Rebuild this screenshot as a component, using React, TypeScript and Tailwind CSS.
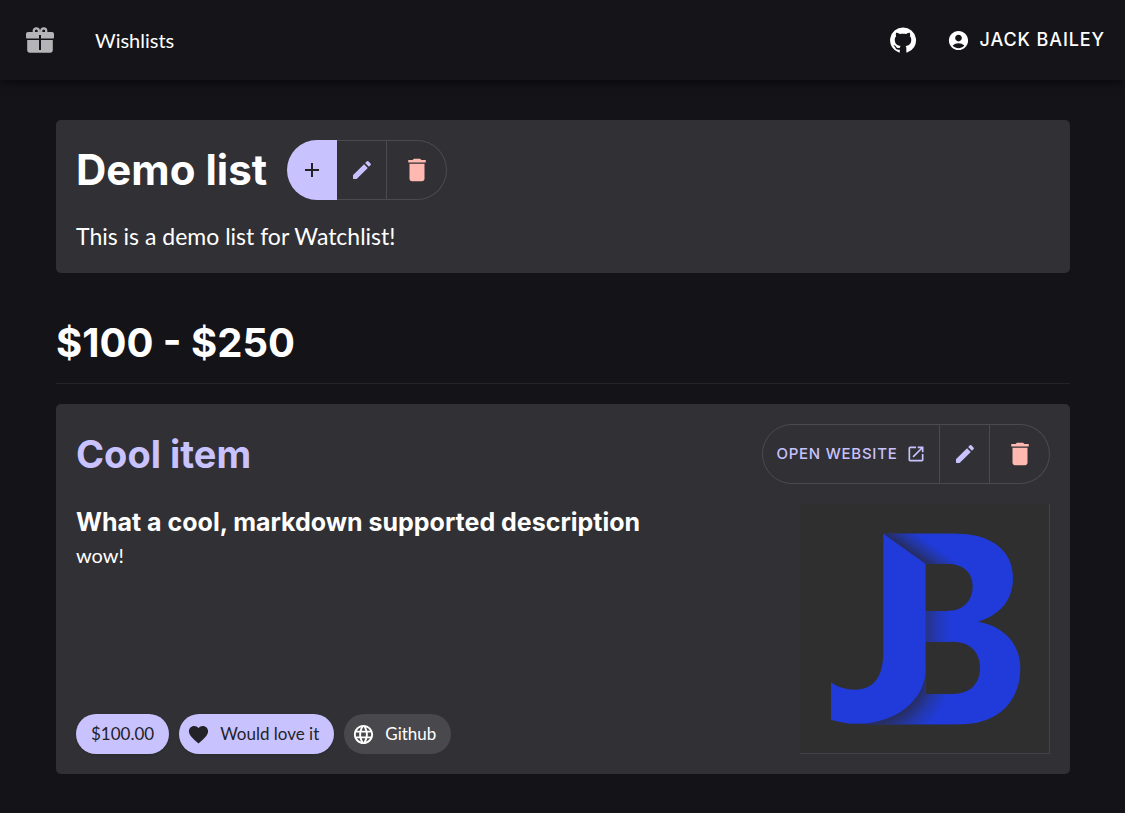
import type { ReactNode } from "react";
import { MdAccountCircle, MdAdd, MdDelete, MdFavorite, MdLanguage, MdOpenInNew } from "react-icons/md";

function GiftIcon() {
  return (
    <svg viewBox="0 0 28 26" className="h-[26px] w-7" aria-hidden="true">
      <g fill="#b5b5b7">
        <path d="M2 5H26C27.100 5 28 5.900 28 7V10.300C28 11 27.500 11.600 26.800 11.600H15V8H13V11.600H1.200C.5 11.600 0 11 0 10.300V7C0 5.900.9 5 2 5Z" />
        <path d="M1.200 12.900H13V23H15V12.900H26.800V23C26.800 24.700 25.700 25.700 24.200 25.700H3.800C2.300 25.700 1.200 24.700 1.200 23Z" />
      </g>
      <g fill="none" stroke="#b5b5b7" strokeWidth="2.200">
        <circle cx="10.300" cy="3.900" r="2.600" />
        <circle cx="17.700" cy="3.900" r="2.600" />
      </g>
    </svg>
  );
}

function GithubIcon() {
  return (
    <svg viewBox="0 0 24 24" fill="currentColor" className="size-7" aria-hidden="true">
      <path d="M12 1.270a11 11 0 00-3.480 21.460c.55.09.73-.28.73-.55v-1.840c-3.030.64-3.670-1.460-3.670-1.460-.55-1.290-1.280-1.650-1.280-1.650-.92-.65.1-.65.1-.65 1.100 0 1.730 1.100 1.730 1.100.92 1.650 2.570 1.200 3.210.92a2 2 0 01.64-1.470c-2.470-.27-5.040-1.190-5.040-5.500 0-1.100.46-2.100 1.200-2.840a3.760 3.760 0 010-2.930s.91-.28 3.110 1.100c1.800-.49 3.700-.49 5.500 0 2.100-1.380 3.020-1.100 3.020-1.100a3.760 3.760 0 01.1 2.930c.83.74 1.200 1.740 1.200 2.940 0 4.210-2.570 5.130-5.040 5.400.45.37.82.92.82 2.020v3.030c0 .27.1.64.73.55A11 11 0 0012 1.270" />
    </svg>
  );
}

function PencilIcon() {
  return (
    <svg viewBox="0 0 24 24" fill="currentColor" className="size-6" aria-hidden="true">
      <path d="M3 17.460v3.040c0 .28.22.5.5.5h3.040c.13 0 .26-.05.35-.15L17.810 9.940l-3.750-3.750L3.150 17.100c-.1.1-.15.22-.15.36zM20.710 7.040c.39-.39.39-1.020 0-1.410l-2.340-2.340a.996.996 0 0 0-1.410 0l-1.830 1.830 3.750 3.750 1.830-1.830z" />
    </svg>
  );
}

function ItemPicture() {
  return (
    <svg viewBox="30 27 747 747" className="size-full" role="img" aria-label="Cool item">
      <defs>
        <linearGradient id="foldTop" gradientUnits="userSpaceOnUse" x1="343" y1="162" x2="378" y2="113">
          <stop offset="0" stopColor="#262c5c" />
          <stop offset="0.5" stopColor="#2336a0" />
          <stop offset="1" stopColor="#203bda" />
        </linearGradient>
        <linearGradient id="foldMiddle" gradientUnits="userSpaceOnUse" x1="407" y1="0" x2="485" y2="0">
          <stop offset="0" stopColor="#273384" />
          <stop offset="0.5" stopColor="#2238ba" />
          <stop offset="1" stopColor="#203bda" />
        </linearGradient>
        <radialGradient id="foldBottom" gradientUnits="userSpaceOnUse" cx="225" cy="500" r="270">
          <stop offset="0.700" stopColor="#272e66" />
          <stop offset="0.850" stopColor="#2338ad" />
          <stop offset="1" stopColor="#203bda" />
        </radialGradient>
      </defs>
      <path
        fill="#203bda"
        fillRule="evenodd"
        d="M280 116H500C605 116 669 168 669 248C669 315 632 358 564 380C642 394 691 446 691 520C691 622 620 688 515 688H230L407 520V207ZM407 207V348H470C520 348 548 318 548 274C548 232 520 207 470 207ZM407 440V597H485C540 597 570 567 570 518C570 470 540 440 485 440Z"
      />
      <path fill="url(#foldTop)" d="M280 116H500V207H407Z" />
      <path fill="#2f2f2f" d="M407 207H470C485 207 494 209 502 212V230H407Z" />
      <path fill="url(#foldMiddle)" d="M407 348H485V440H407Z" />
      <path fill="url(#foldBottom)" d="M407 520V597H500V688H215Z" />
      <path
        fill="#203bda"
        d="M280 116L407 207V520C407 565 390 600 358 630C308 678 210 703 123 674V562C143 577 167 584 195 584C252 584 280 545 280 472Z"
      />
    </svg>
  );
}

const segment =
  "flex h-[60px] items-center justify-center border-y border-r border-[#4b4a4f] text-[#c8c2ff]";

function EditDelete() {
  return (
    <>
      <button type="button" aria-label="Edit" className={`${segment} w-[50px]`}>
        <PencilIcon />
      </button>
      <button
        type="button"
        aria-label="Delete"
        className="flex h-[60px] w-[60px] items-center justify-center rounded-r-full border-y border-r border-[#4b4a4f] text-[#ffb9b1]"
      >
        <MdDelete className="size-[30px]" />
      </button>
    </>
  );
}

function Chip({ icon, filled, children }: { icon?: ReactNode; filled?: boolean; children: ReactNode }) {
  return (
    <li
      className={`flex h-10 items-center gap-[10px] rounded-full pr-[15px] text-[17px] ${
        icon ? "pl-2" : "pl-[15px]"
      } ${filled ? "bg-[#c8c2ff] text-[#232226] shadow-sm" : "bg-[#49484c] text-white"}`}
    >
      {icon}
      {children}
    </li>
  );
}

export default function App() {
  return (
    <div className="min-h-screen bg-[#141318] font-['Lato','Noto_Sans',sans-serif] text-white">
      <header className="flex h-20 items-center bg-[#151419] px-5 shadow-[0_2px_10px_rgba(0,0,0,0.6)]">
        <a href="#home" aria-label="Home" className="px-[6px]">
          <GiftIcon />
        </a>
        <a href="#wishlists" className="ml-[35px] text-xl">
          Wishlists
        </a>
        <div className="ml-auto flex items-center gap-[30px]">
          <a href="#github" aria-label="Github">
            <GithubIcon />
          </a>
          <button
            type="button"
            className="flex items-center gap-[10px] font-['Inter',sans-serif] text-lg font-medium tracking-wider uppercase"
          >
            <MdAccountCircle className="size-[23px]" />
            Jack Bailey
          </button>
        </div>
      </header>

      <main className="py-10 pr-[55px] pl-14">
        <section className="rounded-[5px] bg-[#313034] p-5">
          <div className="flex items-center gap-5">
            <h1 className="font-['Inter',sans-serif] text-[42px] leading-[60px] font-bold">Demo list</h1>
            <div className="flex">
              <button
                type="button"
                aria-label="Add item"
                className="flex h-[60px] w-[50px] items-center justify-center rounded-l-full bg-[#c8c2ff] text-[#232226]"
              >
                <MdAdd className="size-6" />
              </button>
              <EditDelete />
            </div>
          </div>
          <p className="mt-5 text-[23px] leading-[33px]">This is a demo list for Watchlist!</p>
        </section>

        <section className="mt-10">
          <h2 className="border-b border-[#252429] pb-[10px] font-['Inter',sans-serif] text-[40px] leading-[60px] font-bold">
            $100 - $250
          </h2>

          <article className="mt-5 rounded-[5px] bg-[#313034] p-5">
            <div className="flex items-center justify-between">
              <h3 className="font-['Inter',sans-serif] text-[38px] leading-[60px] font-bold text-[#c8c2ff]">
                Cool item
              </h3>
              <div className="flex">
                <a
                  href="#website"
                  className={`${segment} w-[178px] gap-2 rounded-l-full border-l font-['Inter',sans-serif] text-[15px] font-medium tracking-wider uppercase`}
                >
                  Open website
                  <MdOpenInNew className="size-5" />
                </a>
                <EditDelete />
              </div>
            </div>
            <div className="mt-5 flex gap-5">
              <div className="flex flex-1 flex-col justify-between">
                <div>
                  <h4 className="font-['Inter',sans-serif] text-[25px] leading-9 font-bold">
                    What a cool, markdown supported description
                  </h4>
                  <p className="text-xl leading-[30px]">wow!</p>
                </div>
                <ul className="flex gap-[10px]">
                  <Chip filled>$100.00</Chip>
                  <Chip filled icon={<MdFavorite className="size-[23px]" />}>
                    Would love it
                  </Chip>
                  <Chip icon={<MdLanguage className="size-[23px]" />}>Github</Chip>
                </ul>
              </div>
              <div className="size-[250px] border-r border-b border-[#434347] bg-[#2f2f2f]">
                <ItemPicture />
              </div>
            </div>
          </article>
        </section>
      </main>
    </div>
  );
}
